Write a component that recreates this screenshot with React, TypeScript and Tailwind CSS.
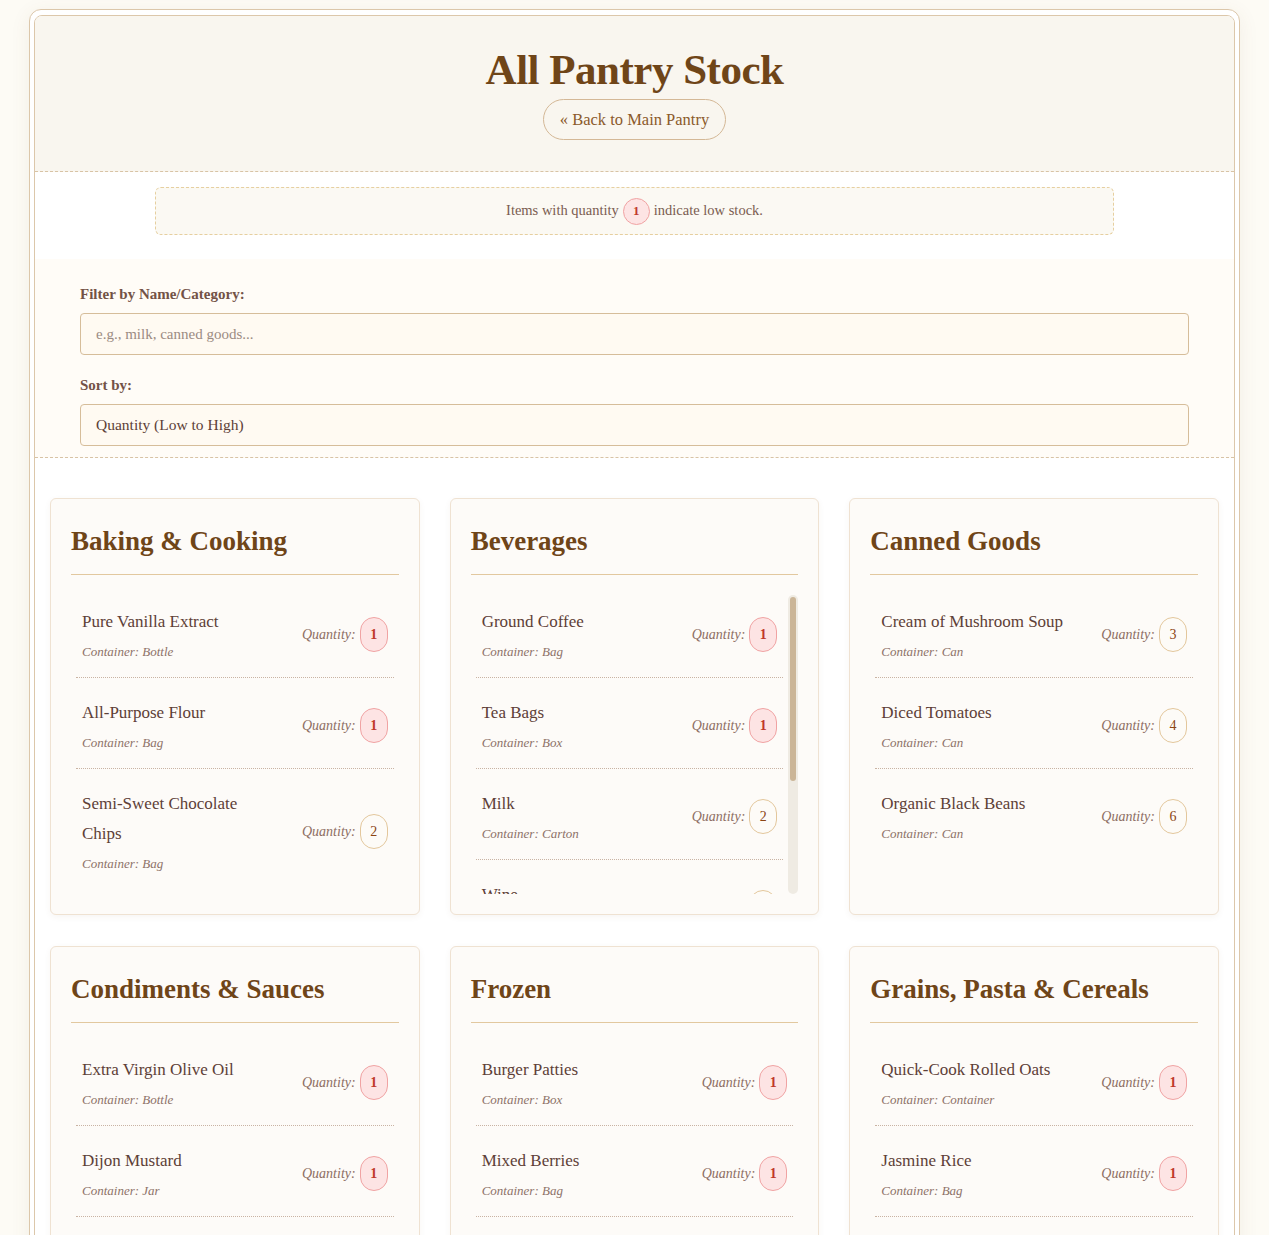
import React from "react";

type Item = { name: string; container: string; qty: number };
type Category = { title: string; items: Item[] };

const categories: Category[] = [
  {
    title: "Baking & Cooking",
    items: [
      { name: "Pure Vanilla Extract", container: "Bottle", qty: 1 },
      { name: "All-Purpose Flour", container: "Bag", qty: 1 },
      { name: "Semi-Sweet Chocolate Chips", container: "Bag", qty: 2 },
    ],
  },
  {
    title: "Beverages",
    items: [
      { name: "Ground Coffee", container: "Bag", qty: 1 },
      { name: "Tea Bags", container: "Box", qty: 1 },
      { name: "Milk", container: "Carton", qty: 2 },
      { name: "Wine", container: "Bottle", qty: 3 },
      { name: "Sparkling Water", container: "Bottle", qty: 6 },
    ],
  },
  {
    title: "Canned Goods",
    items: [
      { name: "Cream of Mushroom Soup", container: "Can", qty: 3 },
      { name: "Diced Tomatoes", container: "Can", qty: 4 },
      { name: "Organic Black Beans", container: "Can", qty: 6 },
    ],
  },
  {
    title: "Condiments & Sauces",
    items: [
      { name: "Extra Virgin Olive Oil", container: "Bottle", qty: 1 },
      { name: "Dijon Mustard", container: "Jar", qty: 1 },
      { name: "Soy Sauce", container: "Bottle", qty: 2 },
    ],
  },
  {
    title: "Frozen",
    items: [
      { name: "Burger Patties", container: "Box", qty: 1 },
      { name: "Mixed Berries", container: "Bag", qty: 1 },
      { name: "Green Peas", container: "Bag", qty: 2 },
    ],
  },
  {
    title: "Grains, Pasta & Cereals",
    items: [
      { name: "Quick-Cook Rolled Oats", container: "Container", qty: 1 },
      { name: "Jasmine Rice", container: "Bag", qty: 1 },
      { name: "Spaghetti", container: "Box", qty: 2 },
    ],
  },
];

const serif = "font-['Liberation_Serif','Times_New_Roman',serif]";
const display = "font-['Liberation_Serif','DejaVu_Serif',serif]";

function Badge({ qty }: { qty: number }) {
  const low = qty <= 1;
  return (
    <span
      className={
        low
          ? "flex h-[35px] min-w-[28px] items-center justify-center rounded-[14px] border border-[#f0a3a3] bg-[#fde4e4] px-[8px] text-[14px] font-bold text-[#c0392b]"
          : "flex h-[35px] min-w-[28px] items-center justify-center rounded-[14px] border border-[#e3c79c] bg-[#fdfbf7] px-[8px] text-[14px] text-[#8b4513]"
      }
    >
      {qty}
    </span>
  );
}

function Card({ cat }: { cat: Category }) {
  const scroll = cat.items.length > 3;
  return (
    <div className="rounded-[6px] border border-[#efe2d2] bg-[#fdfbf8] px-5 pt-5 pb-5 shadow-[0_2px_6px_rgba(120,90,50,0.06)]">
      <h2
        className={`${display} border-b border-[#e2c89f] pt-[4px] pb-[14px] text-[27px] font-bold leading-[37px] text-[#6f4518]`}
      >
        {cat.title}
      </h2>
      <div className="mt-3 flex max-h-[307px] pl-[5px]">
        <ul className={scroll ? "mr-[5px] min-w-0 flex-1 overflow-hidden" : "mr-[5px] min-w-0 flex-1"}>
          {cat.items.map((it) => (
            <li
              key={it.name}
              className="flex items-center justify-between border-b border-dotted border-[#c9b3a3] px-[6px] pt-5 pb-[15px] last:border-b-0"
            >
              <div className="max-w-[190px]">
                <div className="text-[17px] leading-[30px] text-[#5d4037]">{it.name}</div>
                <div className="mt-[5px] text-[13px] italic leading-[20px] text-[#8d7268]">
                  Container: {it.container}
                </div>
              </div>
              <div className="flex items-center gap-[4px]">
                <span className="text-[14px] italic text-[#8d6e63]">Quantity:</span>
                <Badge qty={it.qty} />
              </div>
            </li>
          ))}
        </ul>
        {scroll && (
          <div className="mt-[8px] w-[10px] shrink-0 rounded-[5px] bg-[#efebe3] p-[2px]">
            <div className="h-[184px] rounded-[4px] bg-[#cbb597]" />
          </div>
        )}
      </div>
    </div>
  );
}

export default function App() {
  return (
    <div className={`${serif} min-h-screen bg-[#fdfbf5] pt-[9px] pb-10`}>
      <div className="mx-auto w-[1211px] rounded-[12px] border border-[#dcc7aa] bg-white px-[4px] pt-[5px] pb-[4px] shadow-[0_4px_20px_rgba(120,90,50,0.08)]">
        <div className="overflow-hidden rounded-[8px] border border-[#dcc7aa] bg-white">
          {/* Header */}
          <div className="flex flex-col items-center border-b border-dashed border-[#d8c3a5] bg-[#f9f6ef] pt-[27px] pb-[31px]">
            <h1 className={`${display} mb-[3px] text-[43px] font-bold leading-[53px] tracking-[-0.5px] text-[#6f4518]`}>
              All Pantry Stock
            </h1>
            <button className="rounded-full border border-[#d4b896] bg-transparent px-4 py-[8px] text-[16.5px] leading-[23px] text-[#8b5a2b]">
              « Back to Main Pantry
            </button>
          </div>

          {/* Notice */}
          <div className="bg-white pt-[15px] pb-[24px]">
            <div className="mx-auto flex h-[48px] w-4/5 items-center justify-center gap-[4px] rounded-[6px] border border-dashed border-[#e6cf9f] bg-[#fbf9f3] text-[14.5px] text-[#7a5c50]">
              <span>Items with quantity</span>
              <span className="flex h-[27px] w-[27px] items-center justify-center rounded-full border border-[#f0a3a3] bg-[#fde4e4] text-[13px] font-bold text-[#c0392b]">
                1
              </span>
              <span>indicate low stock.</span>
            </div>
          </div>

          {/* Filters */}
          <div className="border-b border-dashed border-[#d8c3a5] bg-[#fffcf7] px-[45px] pt-[25px] pb-[11px]">
            <label className="block text-[15px] font-semibold leading-[20px] text-[#735246]">
              Filter by Name/Category:
            </label>
            <input
              className="mt-[9px] block h-[42px] w-full rounded-[4px] border border-[#d6bd9a] bg-[#fffaf2] px-[15px] text-[15px] text-[#5d4037] outline-none placeholder:text-[#9b8b82]"
              placeholder="e.g., milk, canned goods..."
            />
            <label className="mt-[20px] block text-[15px] font-semibold leading-[20px] text-[#735246]">
              Sort by:
            </label>
            <div className="mt-[9px] flex h-[42px] w-full items-center rounded-[4px] border border-[#d6bd9a] bg-[#fffaf2] px-[15px] text-[15.5px] text-[#5d4037]">
              Quantity (Low to High)
            </div>
          </div>

          {/* Grid */}
          <div className="grid grid-cols-3 gap-x-[30px] gap-y-[31px] px-[15px] pt-[40px] pb-[30px]">
            {categories.map((c) => (
              <Card key={c.title} cat={c} />
            ))}
          </div>
        </div>
      </div>
    </div>
  );
}
